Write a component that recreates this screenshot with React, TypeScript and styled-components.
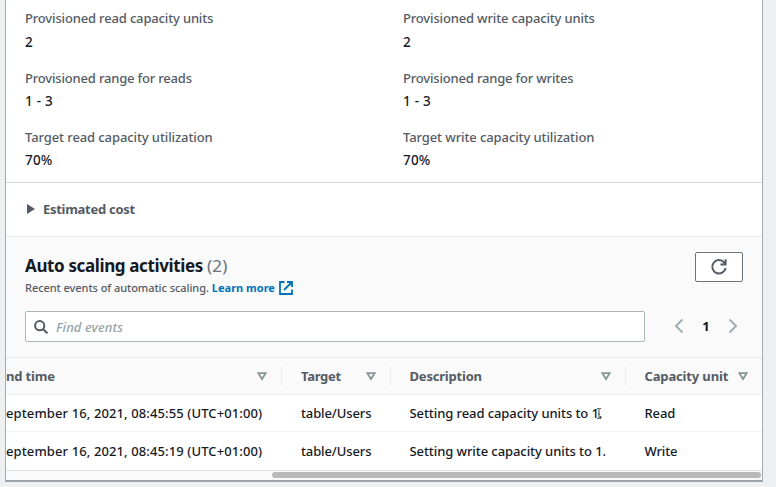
import React from 'react';
import styled, { createGlobalStyle } from 'styled-components';

const GlobalStyle = createGlobalStyle`
  * { box-sizing: border-box; }
  html, body { margin: 0; padding: 0; }
  body {
    width: 776px;
    height: 487px;
    overflow: hidden;
    background: #eff0f2;
    color: #16191f;
    font-family: "Noto Sans", "Open Sans", sans-serif;
    font-size: 13px;
    font-weight: 500;
  }
`;

const Page = styled.main`
  display: flex;
  height: 487px;
  padding: 0 13px 5px 5px;
`;

const Card = styled.section`
  display: flex;
  flex-direction: column;
  width: 758px;
  height: 482px;
  background: #fff;
  border: 1px solid #a4acaf;
  border-top: 0;
  border-bottom: 2px solid #9aa3a7;
  overflow: hidden;
`;

const Text = styled.span<{ $track?: number }>`
  letter-spacing: ${(p) => p.$track ?? 0}px;
  white-space: nowrap;
`;

const Details = styled.dl`
  display: grid;
  grid-template-columns: 378px 1fr;
  row-gap: 13.4px;
  height: 183px;
  margin: 0;
  padding: 7.25px 19px 0;
  border-bottom: 1px solid #d3d7d9;
  align-content: start;
`;

const Field = styled.div`
  height: 46px;
  line-height: 23px;
`;

const Label = styled.dt`
  color: #545b64;
`;

const Value = styled.dd`
  margin: 0;
  padding-top: 0.3px;
  font-size: 13.5px;
  letter-spacing: 0.2px;
`;

const Expander = styled.div`
  display: flex;
  align-items: center;
  gap: 8px;
  height: 53px;
  padding: 0 0 1px 21px;
  color: #545b64;
  font-weight: 700;
`;

const Activities = styled.header`
  height: 122px;
  padding: 15px 19px 0;
  background: #fafafa;
  border-top: 1px solid #eaeded;
  border-bottom: 1px solid #eaeded;
`;

const TitleBar = styled.div`
  display: flex;
  justify-content: space-between;
  height: 59px;
`;

const Title = styled.h2`
  margin: 0;
  height: 28px;
  font-size: 17px;
  line-height: 28px;
  font-weight: 700;
`;

const Count = styled.span`
  color: #687078;
  font-weight: 400;
  margin-left: 4px;
  letter-spacing: 0.3px;
`;

const Subtitle = styled.p`
  display: flex;
  align-items: center;
  margin: 0;
  height: 15px;
  font-size: 11px;
  color: #545b64;
`;

const Link = styled.a`
  display: flex;
  align-items: center;
  gap: 4px;
  margin-left: 3px;
  color: #0073bb;
  font-weight: 700;
`;

const RefreshButton = styled.button`
  display: flex;
  align-items: center;
  justify-content: center;
  width: 48px;
  height: 30px;
  padding: 0;
  color: #545b64;
  background: #fff;
  border: 1px solid #6d737b;
  border-radius: 2px;
`;

const Toolbar = styled.div`
  display: flex;
  align-items: center;
  justify-content: space-between;
`;

const Search = styled.div`
  display: flex;
  align-items: center;
  gap: 8px;
  width: 620px;
  height: 31px;
  padding-left: 8px;
  background: #fff;
  border: 1px solid #aab7b8;
  border-radius: 2px;
  color: #95a5a6;
  font-size: 13px;
  font-style: italic;
`;

const Pager = styled.nav`
  display: flex;
  align-items: center;
  justify-content: space-between;
  width: 64px;
  height: 31px;
  padding-bottom: 2px;
  margin-right: 5px;
  font-weight: 700;
`;

const Row = styled.div<{ $head?: boolean; $last?: boolean }>`
  display: grid;
  grid-template-columns: 276px 108.5px 235px 136.5px;
  align-items: center;
  height: ${(p) => (p.$head || !p.$last ? 37 : 39)}px;
  padding-bottom: ${(p) => (p.$last ? 1 : 0)}px;
  background: ${(p) => (p.$head ? '#fafafa' : '#fff')};
  border-bottom: 1px solid ${(p) => (p.$head ? '#eaeded' : p.$last ? '#e0e3e4' : '#f3f4f4')};
  color: ${(p) => (p.$head ? '#545b64' : '#16191f')};
  font-weight: ${(p) => (p.$head ? 700 : 500)};
`;

const Cell = styled.div<{ $first?: boolean; $divider?: boolean }>`
  position: relative;
  display: flex;
  align-items: center;
  justify-content: space-between;
  height: ${(p) => (p.$divider === undefined ? 'auto' : '18px')};
  padding-left: ${(p) => (p.$first ? 0 : 19)}px;
  padding-right: 14px;
  border-right: ${(p) => (p.$divider ? '1px solid #eaeded' : '0')};
`;

const Pointer = styled.svg`
  position: absolute;
  left: 205px;
  top: 4px;
`;

const Scroller = styled.div`
  flex: 1;
  display: flex;
  justify-content: flex-end;
  align-items: center;
  padding: 0 1px 1px 0;
  background: #fafafa;
`;

const Thumb = styled.div`
  width: 489px;
  height: 6px;
  border-radius: 3px;
  background: #b9b9b9;
`;

const SortIcon = () => (
  <svg width="10" height="9" viewBox="0 0 10 9">
    <path d="M1.3 1.2h7.4L5 7z" fill="none" stroke="#879596" strokeWidth="1.8" />
  </svg>
);

const Chevron = ({ next = false }: { next?: boolean }) => (
  <svg width="10" height="16" viewBox="0 0 10 16" fill="none" stroke="#a0adb1" strokeWidth="2">
    <path d={next ? 'M1.5 1.5 8 8l-6.5 6.5' : 'M8.5 1.5 2 8l6.5 6.5'} />
  </svg>
);

const fields: [string, string, number][] = [
  ['Provisioned read capacity units', '2', -0.16],
  ['Provisioned write capacity units', '2', -0.16],
  ['Provisioned range for reads', '1 - 3', -0.18],
  ['Provisioned range for writes', '1 - 3', -0.18],
  ['Target read capacity utilization', '70%', -0.1],
  ['Target write capacity utilization', '70%', -0.1],
];

const columns: [string, number][] = [
  ['nd time', -0.15],
  ['Target', -0.3],
  ['Description', -0.2],
  ['Capacity unit', -0.15],
];

const rows = [
  ['eptember 16, 2021, 08:45:55 (UTC+01:00)', 'table/Users', 'Setting read capacity units to 1.', 'Read'],
  ['eptember 16, 2021, 08:45:19 (UTC+01:00)', 'table/Users', 'Setting write capacity units to 1.', 'Write'],
];

const cellTrack = [0.11, -0.12, -0.08, -0.15];

export default function App() {
  return (
    <>
      <GlobalStyle />
      <Page>
        <Card>
          <Details>
            {fields.map(([label, value, track]) => (
              <Field key={label}>
                <Label><Text $track={track}>{label}</Text></Label>
                <Value>{value}</Value>
              </Field>
            ))}
          </Details>
          <Expander>
            <svg width="8" height="10" viewBox="0 0 8 10"><path d="M0 0v10l8-5z" fill="#545b64" /></svg>
            <Text $track={-0.28}>Estimated cost</Text>
          </Expander>
          <Activities>
            <TitleBar>
              <div>
                <Title><Text $track={-0.37}>Auto scaling activities</Text><Count>(2)</Count></Title>
                <Subtitle>
                  <Text $track={-0.06}>Recent events of automatic scaling.</Text>
                  <Link>
                    <Text>Learn more</Text>
                    <svg width="14" height="14" viewBox="0 0 14 14" fill="none" stroke="#0073bb" strokeWidth="1.8">
                      <path d="M5.5 1H1v12h12V8.5M8 1h5v5M13 1 5 9" />
                    </svg>
                  </Link>
                </Subtitle>
              </div>
              <RefreshButton aria-label="Refresh">
                <svg width="18" height="18" viewBox="0 0 18 18" fill="none" stroke="currentColor" strokeWidth="2">
                  <path d="M15.6 9.8A6.7 6.7 0 1 1 14.2 4.6L15.2 6M15.6 1.2v5.2h-5.2" />
                </svg>
              </RefreshButton>
            </TitleBar>
            <Toolbar>
              <Search>
                <svg width="14" height="14" viewBox="0 0 14 14" fill="none" stroke="#545b64" strokeWidth="2">
                  <circle cx="5.7" cy="5.7" r="4.6" /><path d="m9 9 4.4 4.4" />
                </svg>
                <Text $track={0.1}>Find events</Text>
              </Search>
              <Pager><Chevron /><span>1</span><Chevron next /></Pager>
            </Toolbar>
          </Activities>
          <Row $head>
            {columns.map(([name, track], i) => (
              <Cell key={name} $first={i === 0} $divider={i < 3}>
                <Text $track={track}>{name}</Text>
                <SortIcon />
              </Cell>
            ))}
          </Row>
          {rows.map((cells, r) => (
            <Row key={r} $last={r === 1}>
              {cells.map((cell, i) => (
                <Cell key={i} $first={i === 0}>
                  <Text $track={cellTrack[i]}>{cell}</Text>
                  {r === 0 && i === 2 && (
                    <Pointer width="6" height="11" viewBox="0 0 6 11" fill="none" stroke="#444" strokeWidth="0.9">
                      <path d="M1 .5h1.5l.5.7.5-.7H5M3 1v9M2 6h2M1 10.5h1.5l.5-.7.5.7H5" />
                    </Pointer>
                  )}
                </Cell>
              ))}
            </Row>
          ))}
          <Scroller><Thumb /></Scroller>
        </Card>
      </Page>
    </>
  );
}
